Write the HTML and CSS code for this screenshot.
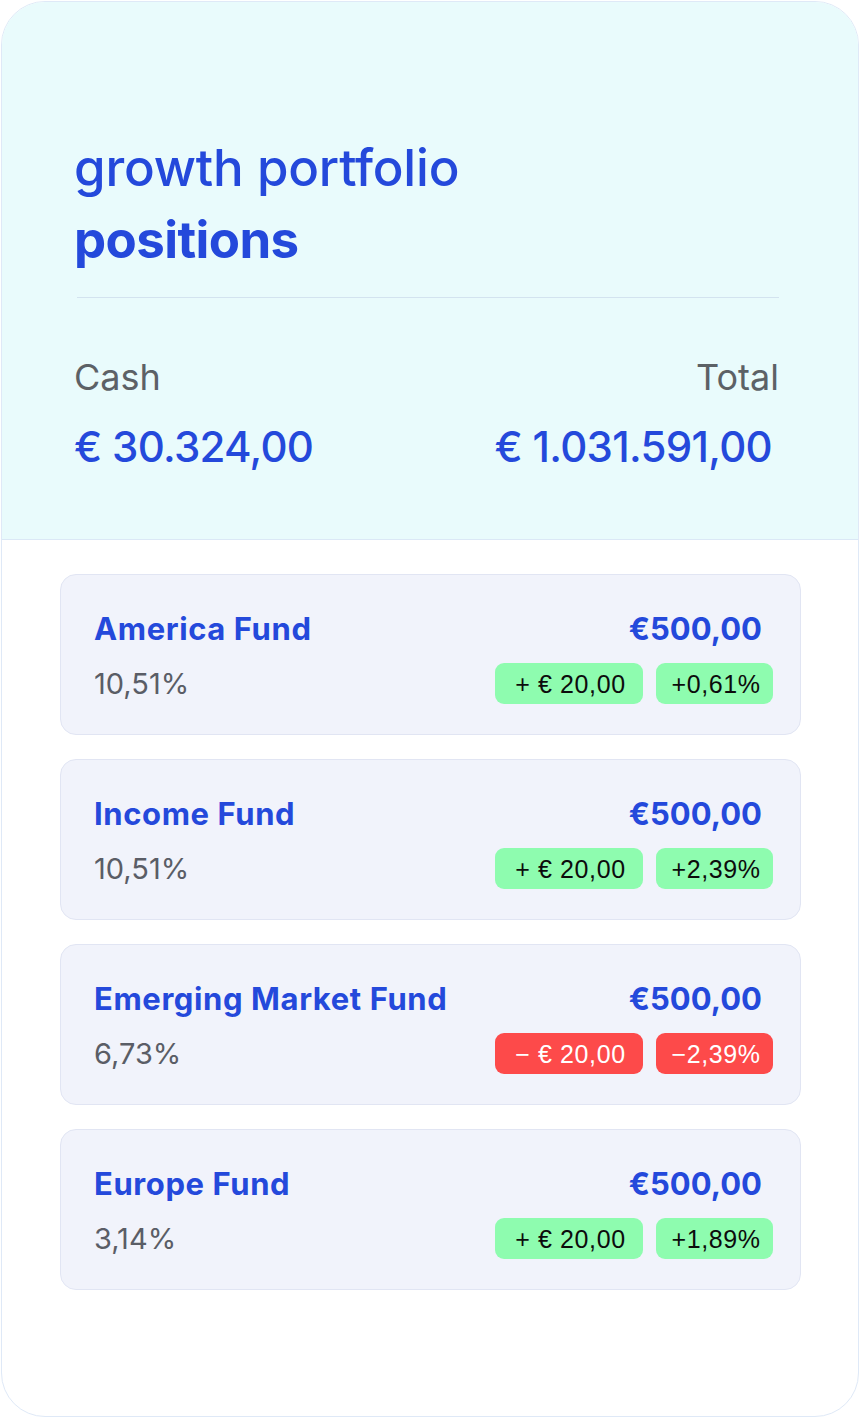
FILE: index.html
```html
<!DOCTYPE html>
<html lang="en">
<head>
<meta charset="utf-8">
<title>growth portfolio positions</title>
<link rel="stylesheet" href="styles.css">
</head>
<body>
<div class="panel">
  <header class="summary">
    <h1 class="title"><span class="title-line">growth portfolio</span><span class="title-line strong">positions</span></h1>
    <div class="divider"></div>
    <div class="totals">
      <div class="total-col">
        <div class="label">Cash</div>
        <div class="amount">€ 30.324,00</div>
      </div>
      <div class="total-col right">
        <div class="label">Total</div>
        <div class="amount">€ 1.031.591,00</div>
      </div>
    </div>
  </header>
  <main class="funds">
    <div class="fund">
      <div class="fund-row">
        <div class="fund-name">America Fund</div>
        <div class="fund-value">€500,00</div>
      </div>
      <div class="fund-row">
        <div class="fund-share">10,51%</div>
        <div class="badges">
          <span class="badge up wide">+ € 20,00</span>
          <span class="badge up">+0,61%</span>
        </div>
      </div>
    </div>
    <div class="fund">
      <div class="fund-row">
        <div class="fund-name">Income Fund</div>
        <div class="fund-value">€500,00</div>
      </div>
      <div class="fund-row">
        <div class="fund-share">10,51%</div>
        <div class="badges">
          <span class="badge up wide">+ € 20,00</span>
          <span class="badge up">+2,39%</span>
        </div>
      </div>
    </div>
    <div class="fund">
      <div class="fund-row">
        <div class="fund-name">Emerging Market Fund</div>
        <div class="fund-value">€500,00</div>
      </div>
      <div class="fund-row">
        <div class="fund-share">6,73%</div>
        <div class="badges">
          <span class="badge down wide">− € 20,00</span>
          <span class="badge down">−2,39%</span>
        </div>
      </div>
    </div>
    <div class="fund">
      <div class="fund-row">
        <div class="fund-name">Europe Fund</div>
        <div class="fund-value">€500,00</div>
      </div>
      <div class="fund-row">
        <div class="fund-share">3,14%</div>
        <div class="badges">
          <span class="badge up wide">+ € 20,00</span>
          <span class="badge up">+1,89%</span>
        </div>
      </div>
    </div>
  </main>
</div>
</body>
</html>
```
FILE: styles.css
```css
* { box-sizing: border-box; }
html, body { margin: 0; padding: 0; background: #ffffff; }
body {
  font-family: Inter, "Noto Sans", sans-serif;
  padding: 1px 1px 2px 1px;
}
.panel {
  width: 858px;
  height: 1416px;
  border: 1px solid #dfe9f7;
  border-radius: 44px;
  overflow: hidden;
  background: #ffffff;
}
.summary {
  background: #e9fbfc;
  border-bottom: 1px solid #dbe8f6;
  padding: 130px 79px 0 72px;
  height: 538px;
}
.title {
  margin: 0;
  font-size: 51px;
  line-height: 72px;
  color: #2449db;
  font-weight: 500;
  letter-spacing: -0.2px;
}
.title-line { display: block; }
.title-line.strong { font-weight: 700; letter-spacing: -0.6px; }
.divider {
  height: 1px;
  background: #d3e3ef;
  margin: 21px 0 0 3px;
}
.totals {
  display: flex;
  justify-content: space-between;
  margin-top: 59px;
}
.total-col { display: flex; flex-direction: column; }
.total-col.right { align-items: flex-end; }
.label {
  font-size: 36px;
  line-height: 40px;
  color: #5c6166;
  font-weight: 400;
}
.amount {
  margin-top: 26px;
  font-size: 42px;
  line-height: 48px;
  color: #2449db;
  font-weight: 500;
  letter-spacing: -0.7px;
}
.total-col.right .amount { margin-right: 7px; }
.funds {
  display: flex;
  flex-direction: column;
  gap: 24px;
  padding: 34px 57px 0 58px;
}
.fund {
  height: 161px;
  background: #f1f3fb;
  border: 1px solid #e1e5f3;
  border-radius: 16px;
  padding: 34px 27px 0 33px;
}
.fund-row {
  display: flex;
  justify-content: space-between;
  align-items: center;
}
.fund-row + .fund-row { margin-top: 14px; }
.fund-name {
  font-size: 31px;
  line-height: 40px;
  font-weight: 700;
  color: #2449db;
  letter-spacing: 0.6px;
}
.fund-value {
  font-size: 31px;
  line-height: 40px;
  font-weight: 700;
  color: #2449db;
  margin-right: 11px;
  letter-spacing: 0;
}
.fund-share {
  font-size: 29px;
  line-height: 40px;
  color: #5a5d66;
  font-weight: 400;
}
.badges { display: flex; gap: 13px; }
.badge {
  font-family: "Liberation Sans", Arial, sans-serif;
  height: 41px;
  border-radius: 9px;
  font-size: 25px;
  line-height: 42px;
  letter-spacing: 0.6px;
  text-align: center;
  width: 117px;
  padding-left: 3px;
}
.badge.wide { width: 148px; }
.badge.up { background: #8efcaf; color: #0c0c0c; }
.badge.down { background: #fd4a4a; color: #ffffff; }
```
